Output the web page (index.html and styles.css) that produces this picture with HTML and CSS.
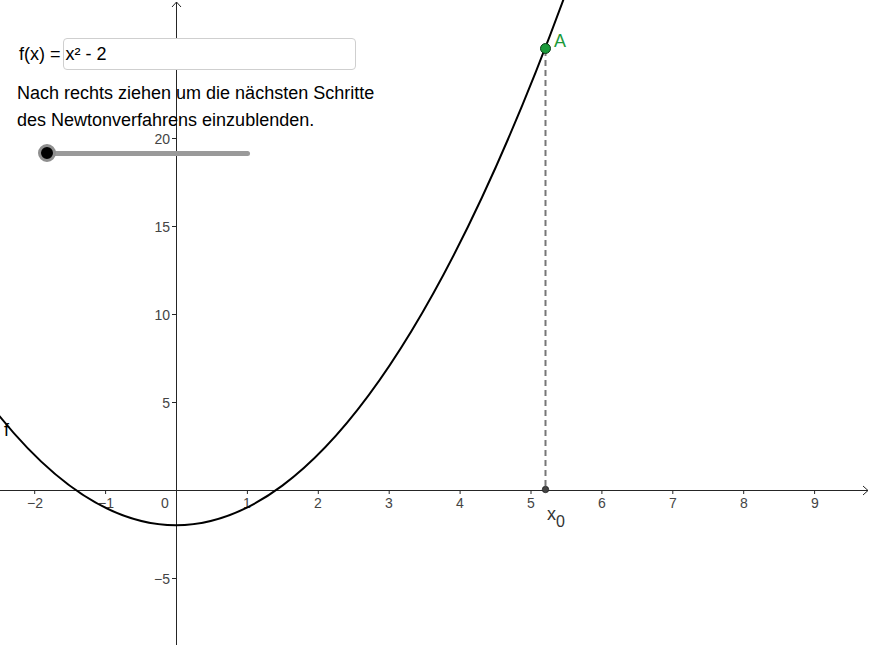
FILE: index.html
```html
<!DOCTYPE html>
<html lang="de">
<head>
<meta charset="utf-8">
<title>Newtonverfahren</title>
<link rel="stylesheet" href="styles.css">
</head>
<body>
<div class="applet">
  <svg class="graph" width="872" height="648" viewBox="0 0 872 648" xmlns="http://www.w3.org/2000/svg">
    <g class="axes" stroke="#252525" stroke-width="1" fill="none">
      <line x1="0" y1="490.5" x2="868" y2="490.5"/>
      <polyline points="863,486 868,490.5 863,495"/>
      <line x1="176.5" y1="2" x2="176.5" y2="645"/>
      <polyline points="172,7 176.5,2 181,7"/>
      <line x1="34.7" y1="490" x2="34.7" y2="494"/>
      <line x1="105.6" y1="490" x2="105.6" y2="494"/>
      <line x1="247.4" y1="490" x2="247.4" y2="494"/>
      <line x1="318.3" y1="490" x2="318.3" y2="494"/>
      <line x1="389.2" y1="490" x2="389.2" y2="494"/>
      <line x1="460.1" y1="490" x2="460.1" y2="494"/>
      <line x1="531" y1="490" x2="531" y2="494"/>
      <line x1="601.9" y1="490" x2="601.9" y2="494"/>
      <line x1="672.8" y1="490" x2="672.8" y2="494"/>
      <line x1="743.7" y1="490" x2="743.7" y2="494"/>
      <line x1="814.6" y1="490" x2="814.6" y2="494"/>
      <line x1="172" y1="138.5" x2="176" y2="138.5"/>
      <line x1="172" y1="226.5" x2="176" y2="226.5"/>
      <line x1="172" y1="314.5" x2="176" y2="314.5"/>
      <line x1="172" y1="402.5" x2="176" y2="402.5"/>
      <line x1="172" y1="578.5" x2="176" y2="578.5"/>
    </g>
    <g class="ticklabels">
      <text x="35" y="508" text-anchor="middle">−2</text>
      <text x="106" y="508" text-anchor="middle">−1</text>
      <text x="165" y="508" text-anchor="middle">0</text>
      <text x="247" y="508" text-anchor="middle">1</text>
      <text x="318" y="508" text-anchor="middle">2</text>
      <text x="389" y="508" text-anchor="middle">3</text>
      <text x="460" y="508" text-anchor="middle">4</text>
      <text x="531" y="508" text-anchor="middle">5</text>
      <text x="602" y="508" text-anchor="middle">6</text>
      <text x="673" y="508" text-anchor="middle">7</text>
      <text x="744" y="508" text-anchor="middle">8</text>
      <text x="815" y="508" text-anchor="middle">9</text>
      <text x="170" y="144" text-anchor="end">20</text>
      <text x="170" y="232" text-anchor="end">15</text>
      <text x="170" y="320" text-anchor="end">10</text>
      <text x="170" y="408" text-anchor="end">5</text>
      <text x="170" y="584" text-anchor="end">−5</text>
    </g>
    <path class="curve" d="M -1.25 415.2 Q 282.35 767.2 565.95 -7.2" fill="none" stroke="#000" stroke-width="2"/>
    <text class="flabel" x="4" y="436">f</text>
    <line x1="545.5" y1="50" x2="545.5" y2="489" stroke="#777" stroke-width="2" stroke-dasharray="6,4"/>
    <circle cx="545.5" cy="489.5" r="3.2" fill="#444" stroke="#222" stroke-width="0.8"/>
    <text class="xlabel" x="547" y="520">x<tspan class="sub" dy="7">0</tspan></text>
    <circle cx="545.5" cy="48.5" r="5" fill="#1b9a3a" stroke="#0d3d19" stroke-width="1"/>
    <text class="alabel" x="554" y="47">A</text>
  </svg>

  <div class="controls">
    <div class="inputrow">
      <span class="inlabel">f(x) =</span>
      <div class="inbox">x² - 2</div>
    </div>
    <p class="caption">Nach rechts ziehen um die nächsten Schritte<br>des Newtonverfahrens einzublenden.</p>
    <div class="slider">
      <div class="track"></div>
      <div class="knob"></div>
    </div>
  </div>
</div>
</body>
</html>
```
FILE: styles.css
```css
html, body {
  margin: 0;
  padding: 0;
  background: #fff;
}
.applet {
  position: relative;
  width: 872px;
  height: 648px;
  overflow: hidden;
  font-family: "Liberation Sans", Arial, sans-serif;
}
.graph {
  display: block;
}
.ticklabels text {
  font-family: "Liberation Sans", Arial, sans-serif;
  font-size: 14px;
  fill: #444;
}
.flabel {
  font-family: "Liberation Sans", Arial, sans-serif;
  font-size: 18px;
  fill: #000;
}
.xlabel {
  font-family: "Liberation Sans", Arial, sans-serif;
  font-size: 18px;
  fill: #333;
}
.xlabel .sub {
  font-size: 16px;
}
.alabel {
  font-family: "Liberation Sans", Arial, sans-serif;
  font-size: 18px;
  fill: #1b9a3a;
}
.controls {
  position: absolute;
  left: 0;
  top: 0;
  padding: 38px 0 0 17px;
  display: flex;
  flex-direction: column;
}
.inputrow {
  display: flex;
  align-items: center;
  margin-left: 2px;
}
.inlabel {
  font-size: 18px;
  color: #000;
  margin-right: 2px;
  white-space: pre;
}
.inbox {
  box-sizing: border-box;
  width: 293px;
  height: 32px;
  border: 1px solid #cfcfcf;
  border-radius: 4px;
  background: #fff;
  font-size: 18px;
  line-height: 30px;
  padding-left: 2px;
  color: #000;
}
.caption {
  margin: 10px 0 0 0;
  font-size: 18px;
  line-height: 27px;
  color: #000;
  white-space: nowrap;
}
.slider {
  position: relative;
  width: 240px;
  height: 22px;
  margin-top: 8px;
}
.track {
  position: absolute;
  left: 30px;
  top: 9px;
  width: 203px;
  height: 5px;
  border-radius: 3px;
  background: #9a9a9a;
}
.knob {
  position: absolute;
  left: 21px;
  top: 2px;
  width: 12px;
  height: 12px;
  border-radius: 50%;
  background: #000;
  border: 3px solid #8f8f8f;
}
```
